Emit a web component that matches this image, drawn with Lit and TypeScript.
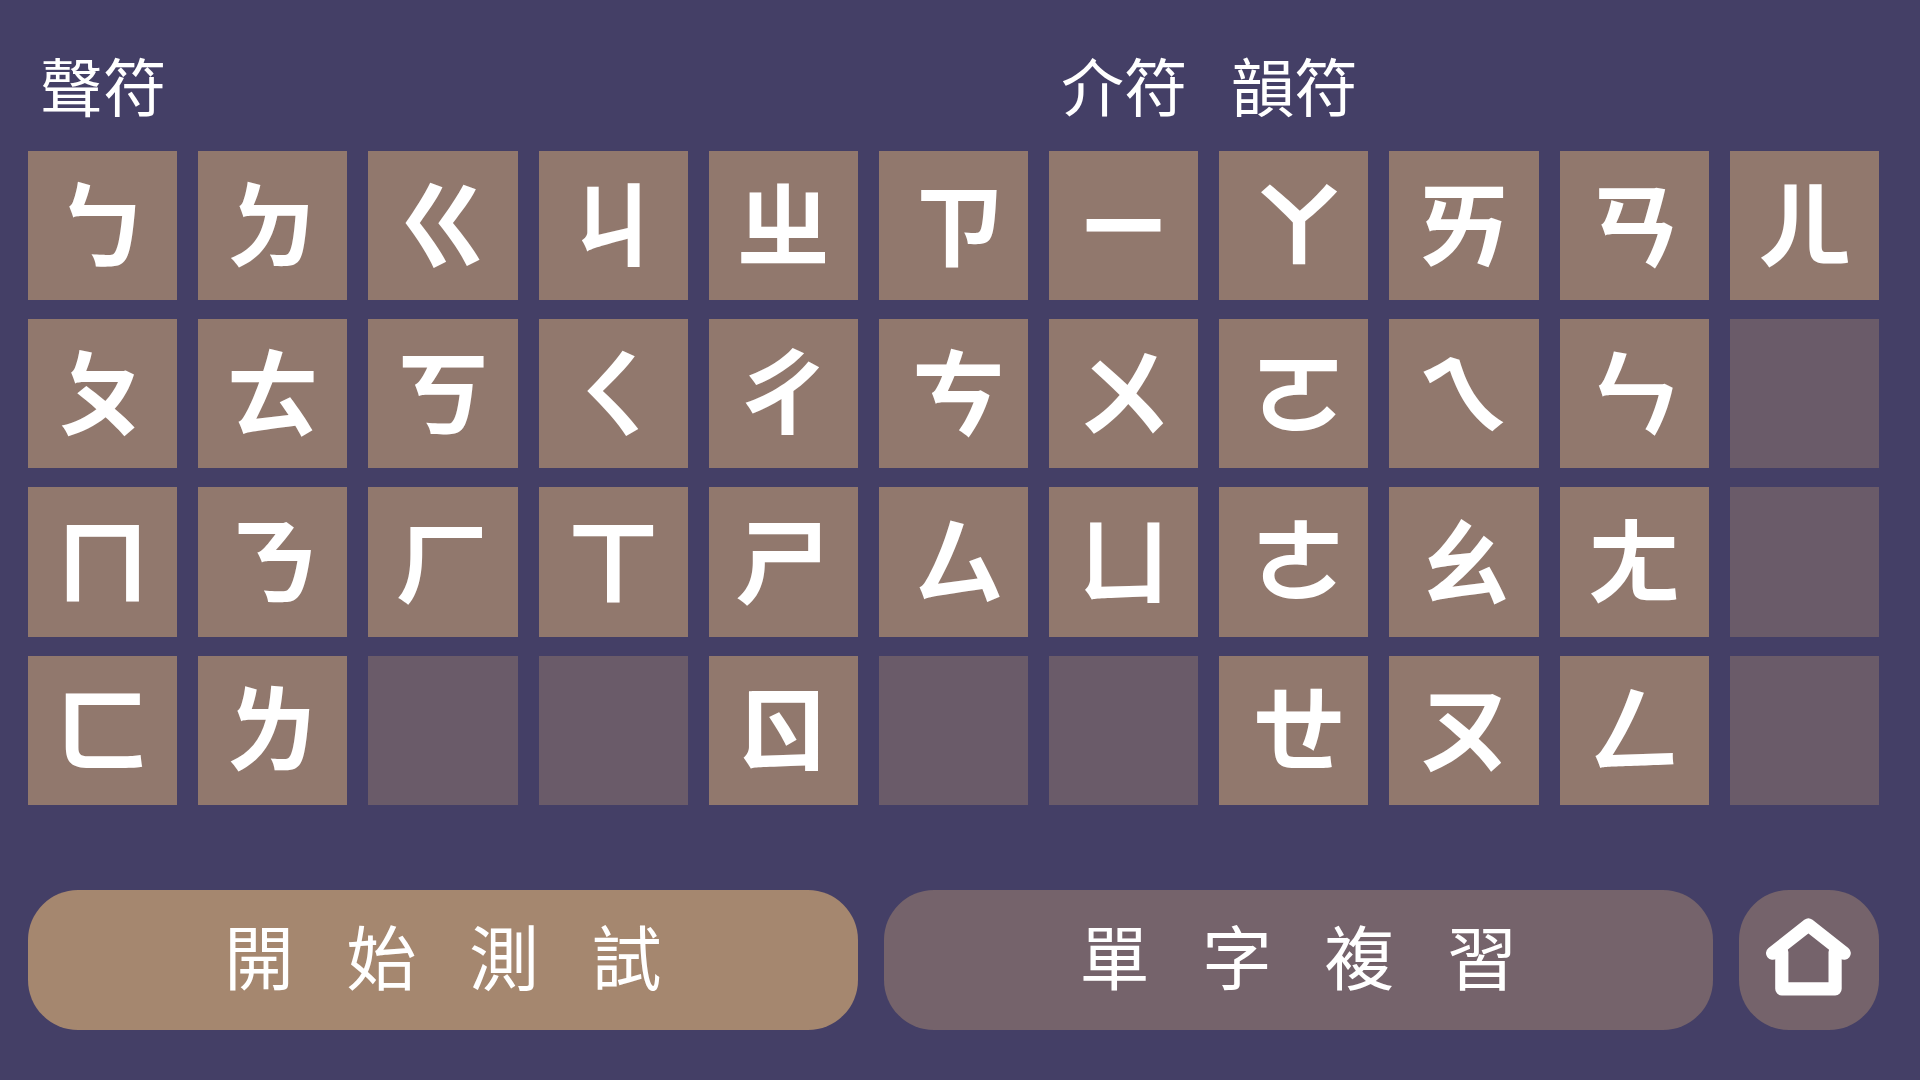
import { LitElement, html, css } from "lit";
import { customElement } from "lit/decorators.js";
import { classMap } from "lit/directives/class-map.js";

interface Group {
  title: string;
  column: string;
}

const GROUPS: Group[] = [
  { title: "聲符", column: "initials" },
  { title: "介符", column: "medials" },
  { title: "韻符", column: "finals" },
];

// One string per row; a dot marks an unused cell.
const ROWS: string[] = [
  "ㄅㄉㄍㄐㄓㄗㄧㄚㄞㄢㄦ",
  "ㄆㄊㄎㄑㄔㄘㄨㄛㄟㄣ.",
  "ㄇㄋㄏㄒㄕㄙㄩㄜㄠㄤ.",
  "ㄈㄌ..ㄖ..ㄝㄡㄥ.",
];

// Columns on either side of the medials, whose symbols are set to the right.
const INDENTED = new Set([5, 7]);

const spaced = (label: string) => [...label].join("\u00a0\u00a0\u00a0");

@customElement("app-root")
export class AppRoot extends LitElement {
  static styles = css`
    :host {
      display: block;
      min-height: 100vh;
      box-sizing: border-box;
      padding: 36px 41px 50px 28px;
      background: #443f66;
      color: #fff;
      font-family: "Noto Sans CJK TC", sans-serif;
    }
    .page {
      display: flex;
      flex-direction: column;
    }
    button {
      border: 0;
      margin: 0;
      padding: 0;
      color: inherit;
      font: inherit;
      cursor: pointer;
    }
    .groups,
    .board {
      display: grid;
      grid-template-columns: repeat(11, minmax(0, 1fr));
      column-gap: 21px;
    }
    .group {
      margin: 0;
      padding: 0 0 19px 12px;
      font-size: 63px;
      font-weight: 400;
      line-height: 96px;
      white-space: nowrap;
    }
    .initials {
      grid-column: 1 / span 6;
    }
    .medials {
      grid-column: 7;
    }
    .finals {
      grid-column: 8 / span 4;
    }
    .board {
      row-gap: 19px;
    }
    .tile {
      aspect-ratio: 1;
      display: flex;
      align-items: center;
      justify-content: center;
    }
    .symbol {
      padding-bottom: 12px;
      background: rgb(165 135 111 / 0.8);
      font-size: 96px;
      font-weight: 700;
      line-height: 1;
    }
    .indented {
      padding-left: 10px;
    }
    .blank {
      background: rgb(165 135 111 / 0.4);
    }
    .actions {
      display: flex;
      gap: 26px;
      margin-top: 85px;
    }
    .action {
      flex: 1;
      height: 140px;
      border-radius: 50px;
      background: rgb(165 135 111 / 0.5);
      font-family: "Liberation Serif", "Noto Sans CJK TC", sans-serif;
      font-size: 70px;
      line-height: 1;
      white-space: nowrap;
    }
    .label {
      padding-top: 4px;
    }
    .primary {
      background: rgb(165 135 111);
    }
    .home {
      flex: 0 0 140px;
    }
    .icon {
      display: block;
      width: 100%;
      height: 100%;
      fill: none;
      stroke: currentColor;
      stroke-width: 13.2;
      stroke-linecap: round;
      stroke-linejoin: round;
    }
  `;

  render() {
    return html`
      <main class="page">
        <header class="groups">
          ${GROUPS.map((g) => html`<h2 class="group ${g.column}">${g.title}</h2>`)}
        </header>
        <section class="board">
          ${ROWS.flatMap((row) =>
            [...row].map((s, column) =>
              s === "."
                ? html`<div class="tile blank"></div>`
                : html`<button
                    class=${classMap({ tile: true, symbol: true, indented: INDENTED.has(column) })}
                    type="button"
                  >${s}</button>`
            )
          )}
        </section>
        <nav class="actions">
          <button class="action label primary" type="button">${spaced("開始測試")}</button>
          <button class="action label" type="button">${spaced("單字複習")}</button>
          <button class="action home" type="button" aria-label="首頁">
            <svg class="icon" viewBox="0 0 140 140" aria-hidden="true">
              <path d="M33.6 63.2 69.4 35 105.2 63.2" />
              <path d="M42.8 62V98.8H96.1V62" />
            </svg>
          </button>
        </nav>
      </main>
    `;
  }
}
